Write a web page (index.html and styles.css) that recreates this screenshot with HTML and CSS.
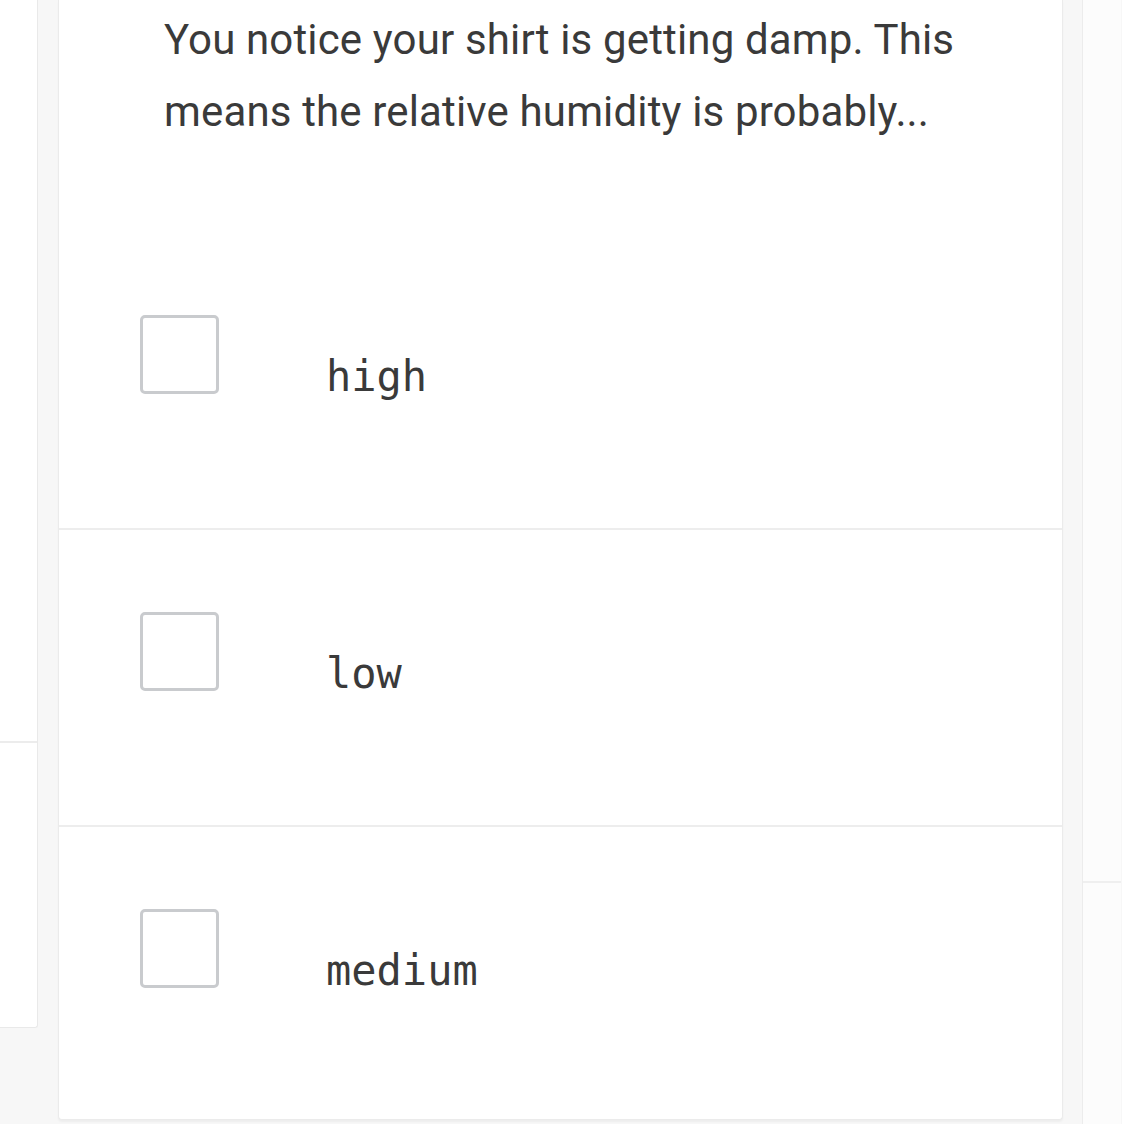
FILE: index.html
```html
<!DOCTYPE html>
<html lang="en">
<head>
  <meta charset="UTF-8">
  <meta name="viewport" content="width=device-width, initial-scale=1.0">
  <title>Question</title>
  <link rel="stylesheet" href="styles.css">
</head>
<body>
  <div class="layout">
    <!-- left column (cut off) -->
    <aside class="side side-left">
      <div class="side-top"></div>
    </aside>

    <!-- question card -->
    <main class="card">
      <div class="question">
        You notice your shirt is getting damp. This
        means the relative humidity is probably...
      </div>

      <ul class="answers">
        <li class="answer">
          <span class="box"></span>
          <span class="label">high</span>
        </li>
        <li class="answer">
          <span class="box"></span>
          <span class="label">low</span>
        </li>
        <li class="answer">
          <span class="box"></span>
          <span class="label">medium</span>
        </li>
      </ul>
    </main>

    <!-- right column (cut off) -->
    <aside class="side side-right">
      <div class="side-top"></div>
    </aside>
  </div>
</body>
</html>
```

FILE: styles.css
```css
body {
  margin: 0;
  padding: 0;
  background-color: #f7f7f7;
  font-family: Roboto, "Liberation Sans", sans-serif;
  color: #333;
  overflow: hidden;
}

.layout {
  display: flex;
  align-items: flex-start;
  height: 1124px;
}

.side {
  background: #fff;
  flex: none;
}

.side-left {
  width: 37px;
  height: 1027px;
  border-right: 1px solid #e9e9e9;
  border-bottom: 1px solid #e9e9e9;
  border-bottom-right-radius: 3px;
}

.side-left .side-top {
  height: 741px;
  border-bottom: 2px solid #ececec;
}

.side-right {
  width: 38px;
  height: 1124px;
  margin-left: 19px;
  background: #fcfcfc;
  border-left: 1px solid #ececec;
}

.side-right .side-top {
  height: 881px;
  border-bottom: 2px solid #efefef;
}

.card {
  width: 1003px;
  height: 1119px;
  margin-left: 20px;
  background: #fff;
  border: 1px solid #ebebeb;
  border-top: none;
  border-radius: 0 0 4px 4px;
  box-shadow: 0 2px 2px rgba(0, 0, 0, 0.04);
  flex: none;
}

.question {
  height: 231px;
  box-sizing: border-box;
  padding: 4px 30px 0 105px;
  font-size: 42px;
  line-height: 72px;
  letter-spacing: 0.15px;
  color: #3a3a3a;
}

.answers {
  list-style: none;
  margin: 0;
  padding: 0;
}

.answer {
  display: flex;
  align-items: flex-start;
  height: 297px;
  box-sizing: border-box;
  padding: 82px 0 0 81px;
  border-top: 2px solid #ededed;
}

.answer:first-child {
  border-top: none;
  padding-top: 84px;
}

.box {
  width: 79px;
  height: 79px;
  box-sizing: border-box;
  border: 3px solid #c9cbce;
  border-radius: 5px;
  flex: none;
}

.label {
  margin: 41px 0 0 107px;
  font-family: "DejaVu Sans Mono", "Liberation Mono", monospace;
  font-size: 42px;
  line-height: 42px;
  color: #3a3a3a;
}
```
